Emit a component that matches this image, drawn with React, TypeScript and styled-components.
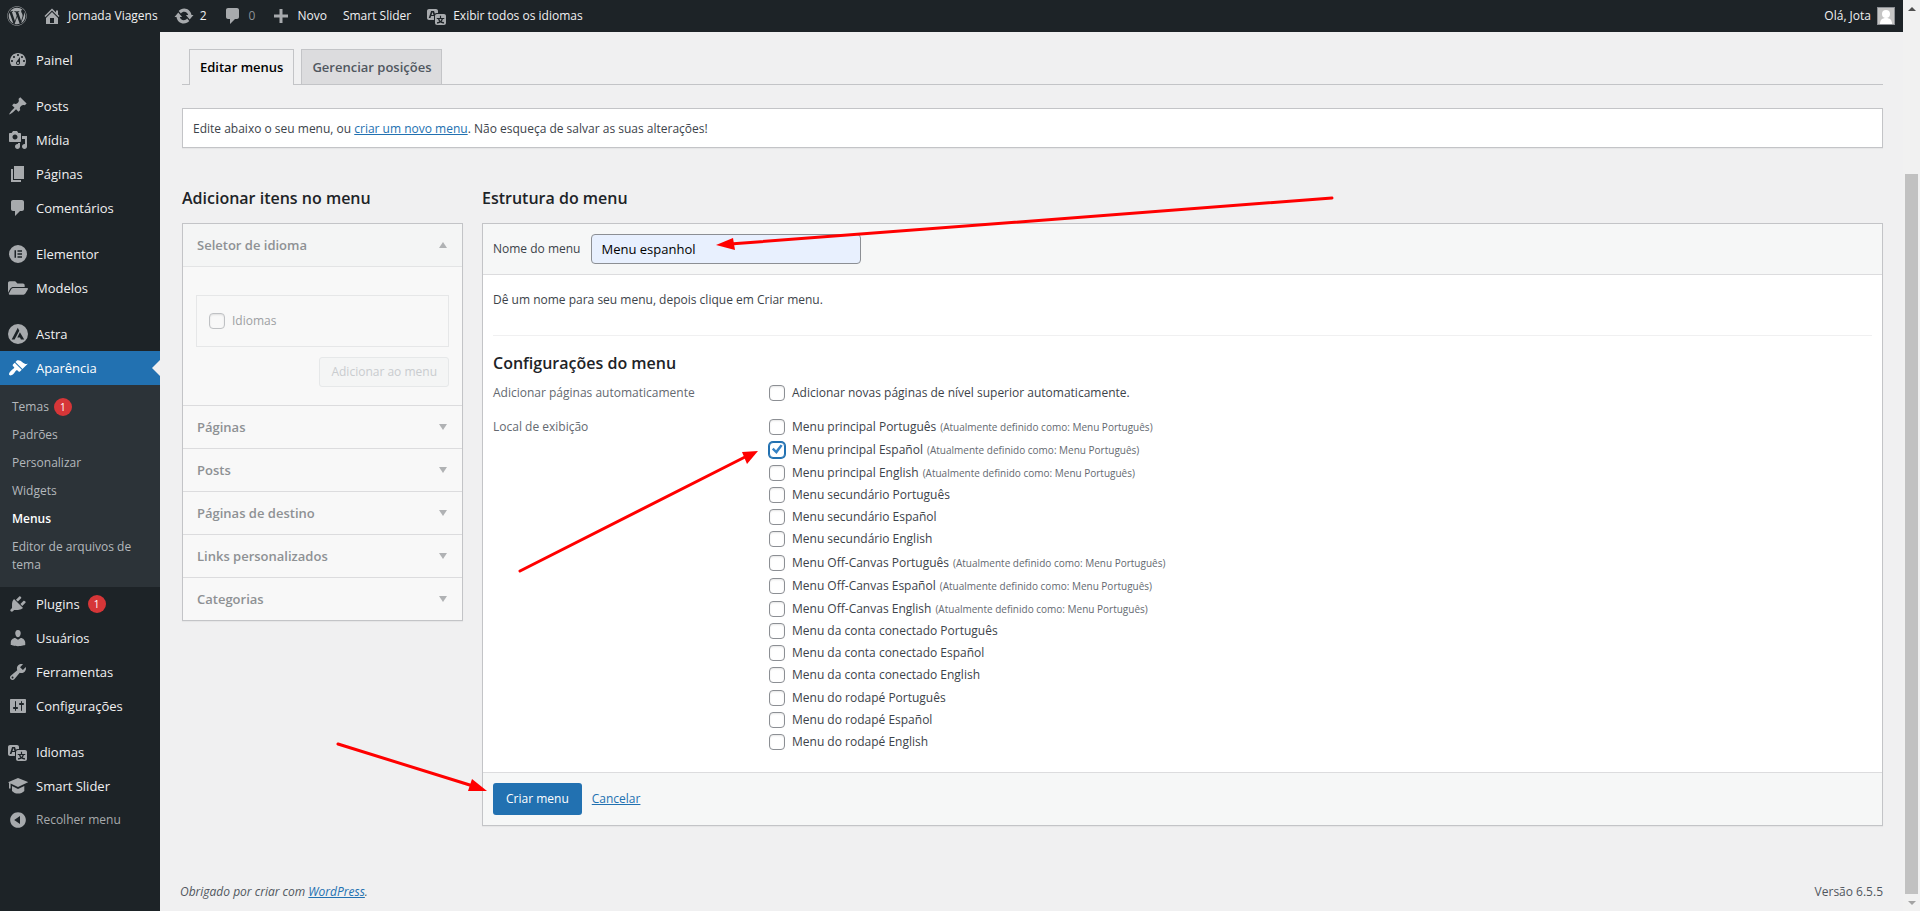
import React, { useState } from 'react';
import styled, { createGlobalStyle, css } from 'styled-components';
import { FaFolderOpen, FaWordpress } from 'react-icons/fa';

const GlobalStyle = createGlobalStyle`
  *, *::before, *::after { box-sizing: border-box; }
  body {
    margin: 0;
    background: #f0f0f1;
    color: #3c434a;
    font: 12px/18px "Open Sans", "Noto Sans", sans-serif;
  }
  button, input { font: inherit; }
  h2, h3, p, ul { margin: 0; padding: 0; }
  ul { list-style: none; }
  a { color: #2271b1; }
`;

const paths = {
  home: 'M16 8.5l1.53 1.53-1.06 1.06L10 4.6l-6.47 6.49-1.06-1.06L10 2.5l4 4v-2h2v4zm-6-2.46l6 5.99V18H4v-5.97zM12 17v-5H8v5h4z',
  update:
    'M10.2 2.5c3.700 0 6.900 2.900 7.300 6.600h2l-3.800 4.400-3.800-4.400h2.300c-.4-1.900-2-3.300-4-3.300-1.300 0-2.500.6-3.300 1.600L4.700 5C6 3.500 8 2.500 10.200 2.500zm-.4 15c-3.700 0-6.900-2.900-7.300-6.600h-2l3.800-4.400 3.800 4.400H5.800c.4 1.900 2 3.300 4 3.300 1.300 0 2.500-.6 3.300-1.600L15.300 15c-1.300 1.500-3.300 2.500-5.500 2.500z',
  plus: 'M17 8.5v3h-5.5V17h-3v-5.5H3v-3h5.5V3h3v5.5z',
  dashboard:
    'M3.76 16h12.48c1.1-1.37 1.76-3.11 1.76-5 0-4.42-3.58-8-8-8s-8 3.58-8 8c0 1.89.66 3.63 1.76 5zM10 4c.55 0 1 .45 1 1s-.45 1-1 1-1-.45-1-1 .45-1 1-1zM6 6c.55 0 1 .45 1 1s-.45 1-1 1-1-.45-1-1 .45-1 1-1zm8 0c.55 0 1 .45 1 1s-.45 1-1 1-1-.45-1-1 .45-1 1-1zm-5.37 5.55L12 7v6c0 1.1-.9 2-2 2s-2-.9-2-2c0-.57.24-1.08.63-1.45zM4 10c.55 0 1 .45 1 1s-.45 1-1 1-1-.45-1-1 .45-1 1-1zm12 0c.55 0 1 .45 1 1s-.45 1-1 1-1-.45-1-1 .45-1 1-1zm-5 3c0-.55-.45-1-1-1s-1 .45-1 1 .45 1 1 1 1-.45 1-1z',
  pin: 'M10.44 3.02l1.82-1.82 6.36 6.35-1.83 1.82c-1.05-.68-2.48-.57-3.41.36l-.75.75c-.92.93-1.04 2.35-.35 3.41l-1.83 1.82-2.41-2.41-2.8 2.79c-.42.42-3.38 2.71-3.8 2.29s1.86-3.39 2.28-3.81l2.79-2.79L4.1 9.36l1.83-1.82c1.05.69 2.48.57 3.4-.36l.75-.75c.93-.92 1.05-2.35.36-3.41z',
  media:
    'M13 11V4c0-.55-.45-1-1-1h-1.67L9 1H5L3.67 3H2c-.55 0-1 .45-1 1v7c0 .55.45 1 1 1h10c.55 0 1-.45 1-1zM7 4.5c1.38 0 2.5 1.12 2.5 2.5S8.38 9.5 7 9.5 4.5 8.38 4.5 7 5.62 4.5 7 4.5zM14 6h5v10.5c0 1.38-1.12 2.5-2.5 2.5S14 17.88 14 16.5s1.12-2.5 2.5-2.5c.17 0 .34.02.5.05V9h-3V6zm-4 8.05V13h2v3.5c0 1.38-1.12 2.5-2.5 2.5S7 17.88 7 16.5 8.12 14 9.5 14c.17 0 .34.02.5.05z',
  page: 'M6 15V2h10v13H6zm-1 1h8v2H3V5h2v11z',
  comment: 'M5 2h9c1.1 0 2 .9 2 2v7c0 1.1-.9 2-2 2h-2l-5 5v-5H5c-1.1 0-2-.9-2-2V4c0-1.1.9-2 2-2z',
  elementor: 'M10 1a9 9 0 100 18 9 9 0 000-18zM6.500 6.200h1.500v7.600H6.500zM9.500 6.200h4.500v1.500H9.500zM9.500 9.250h4.500v1.500H9.500zM9.500 12.300h4.500v1.500H9.500z',
  astra: 'M10 0a10 10 0 100 20 10 10 0 000-20zM9.800 3.800L11.300 6.800 6.600 15.600H3.700zM11.900 8.200L16.200 15.600H12.900L12 13.500H9.300z',
  brush:
    'M14.48 11.06L7.41 3.99l1.5-1.5c.5-.56 2.3-.47 3.51.32 1.21.8 1.43 1.28 2.91 2.1 1.18.64 2.45 1.26 4.45.85zm-.71.71L6.7 4.7 4.93 6.47c-.39.39-.39 1.02 0 1.41l1.06 1.06c.39.39.39 1.03 0 1.42-.6.6-1.43 1.11-2.21 1.69-.35.26-.7.53-1.01.84C1.43 14.23.4 16.08 1.4 17.07c.99 1 2.84-.03 4.18-1.36.31-.31.58-.66.85-1.02.57-.78 1.08-1.61 1.69-2.21.39-.39 1.02-.39 1.41 0l1.06 1.06c.39.39 1.02.39 1.41 0z',
  plug: 'M13.11 4.36L9.87 7.6 8 5.73l3.24-3.24c.35-.34 1.05-.2 1.56.32.52.51.66 1.21.31 1.55zm-8 1.77l.91-1.12 9.01 9.01-1.19.84c-.71.71-2.63 1.16-3.82 1.16H6.14L4.9 17.26c-.59.59-1.54.59-2.12 0-.59-.58-.59-1.53 0-2.12l1.24-1.24v-3.88c0-1.13.4-3.19 1.09-3.89zm7.26 3.97l3.24-3.24c.34-.35 1.04-.21 1.55.31.52.51.66 1.21.31 1.55l-3.24 3.25z',
  user: 'M10 9.25c-2.27 0-2.73-3.44-2.73-3.44C7 4.02 7.82 2 9.97 2c2.16 0 2.98 2.02 2.71 3.81 0 0-.41 3.44-2.68 3.44zm0 2.57L12.72 10c2.39 0 4.52 2.33 4.52 4.53v2.49s-3.65 1.13-7.24 1.13c-3.65 0-7.24-1.13-7.24-1.13v-2.49c0-2.25 1.94-4.48 4.47-4.48z',
  wrench:
    'M16.68 9.77c-1.34 1.34-3.3 1.67-4.95.99l-5.41 6.52c-.99.99-2.59.99-3.58 0s-.99-2.59 0-3.57l6.52-5.42c-.68-1.65-.35-3.61.99-4.95 1.28-1.28 3.12-1.62 4.72-1.06l-2.89 2.89 2.82 2.82 2.86-2.87c.53 1.58.18 3.39-1.08 4.65zM3.81 16.21c.4.39 1.04.39 1.43 0 .4-.4.4-1.04 0-1.43-.39-.4-1.03-.4-1.43 0-.39.39-.39 1.03 0 1.43z',
  settings:
    'M18 16V4c0-.55-.45-1-1-1H3c-.55 0-1 .45-1 1v12c0 .55.45 1 1 1h14c.55 0 1-.45 1-1zM8 11h1c.55 0 1 .45 1 1s-.45 1-1 1H8v1.500c0 .28-.22.5-.5.5s-.5-.22-.5-.5V13H6c-.55 0-1-.45-1-1s.45-1 1-1h1V5.500c0-.28.22-.5.5-.5s.5.22.5.5V11zm5-2h-1c-.55 0-1-.45-1-1s.45-1 1-1h1V5.500c0-.28.22-.5.5-.5s.5.22.5.5V7h1c.55 0 1 .45 1 1s-.45 1-1 1h-1v5.500c0 .28-.22.5-.5.5s-.5-.22-.5-.5V9z',
  translation:
    'M11 7H9.49c-.63 0-1.25.3-1.59.7L7 5H4.13l-2.39 7h1.69l.74-2H7v4H2c-1.1 0-2-.9-2-2V5c0-1.1.9-2 2-2h7c1.1 0 2 .9 2 2v2zM6.51 9H4.49l1-2.93zM10 8h7c1.1 0 2 .9 2 2v7c0 1.1-.9 2-2 2h-7c-1.1 0-2-.9-2-2v-7c0-1.1.9-2 2-2zm7.25 5v-1.08h-3.17V9.75h-1.16v2.17H9.75V13h1.28c.11.85.56 1.85 1.28 2.62-.87.36-1.89.62-2.31.62-.01.02.22.97.2 1.46.84 0 2.21-.5 3.28-1.15 1.09.65 2.48 1.15 3.34 1.15-.02-.49.2-1.44.2-1.46-.43 0-1.49-.27-2.38-.63.7-.77 1.14-1.77 1.25-2.61h1.36zm-3.81 1.93c-.5-.46-.85-1.13-1.01-1.93h2.09c-.17.8-.51 1.47-1 1.93l-.04.03s-.03-.02-.04-.03z',
  cap: 'M10 2L0 6.200l1 .5V12.500h1.600V7.500L10 11l10.200-4.800zM4 9.900V15c1.500 1.600 3.600 2.600 6 2.600s4.900-1 6.300-2.600V9.900L10 12.900z',
  collapse:
    'M10 2.16c4.33 0 7.84 3.51 7.84 7.84s-3.51 7.84-7.84 7.84S2.16 14.33 2.16 10 5.71 2.16 10 2.16zm2 11.72V6.12L6.18 9.97z',
};

type IconName = keyof typeof paths;

const Glyph = styled.svg`
  flex: none;
  width: 20px;
  height: 20px;
  fill: currentColor;
`;

const Icon = ({ name }: { name: IconName }) => (
  <Glyph viewBox="0 0 20 20" aria-hidden="true">
    <path fillRule="evenodd" d={paths[name]} />
  </Glyph>
);

/* Window frame */

const Frame = styled.div`
  position: relative;
  display: grid;
  grid-template-columns: minmax(0, 1fr) 17px;
  min-height: 100vh;
`;

const Page = styled.div`
  display: grid;
  grid-template-columns: 160px minmax(0, 1fr);
  grid-template-rows: 32px 1fr;
`;

const Scrollbar = styled.div`
  display: flex;
  flex-direction: column;
  background: #f1f1f1;
`;

const ScrollArrow = styled.span<{ $down?: boolean }>`
  display: grid;
  place-items: center;
  height: 17px;

  &::before {
    content: '';
    border: 4px solid transparent;
    ${({ $down }) =>
      $down
        ? css`border-top-color: #a3a3a3; border-bottom: 0;`
        : css`border-bottom-color: #505050; border-top: 0;`}
  }
`;

const ScrollGap = styled.span`
  flex: 157;
`;

const ScrollThumb = styled.span`
  flex: 720;
  margin: 0 2px;
  background: #c1c1c1;
`;

/* Admin bar */

const AdminBar = styled.header`
  grid-column: 1 / -1;
  display: flex;
  justify-content: space-between;
  padding-left: 7px;
  background: #1d2327;
`;

const BarGroup = styled.nav`
  display: flex;
  align-items: center;
`;

const BarLink = styled.a<{ $muted?: boolean }>`
  display: flex;
  align-items: center;
  gap: 6px;
  height: 32px;
  padding: 0 8px;
  color: ${({ $muted }) => ($muted ? '#8c9196' : '#f0f0f1')};
  text-decoration: none;
  white-space: nowrap;

  svg {
    color: #a7aaad;
  }
`;

const LogoLink = styled(BarLink)`
  padding: 0 7px 0 0;
`;

const Avatar = styled.svg`
  width: 18px;
  height: 18px;
`;

/* Side menu */

const SideMenu = styled.nav`
  padding-top: 11px;
  background: #1d2327;
  font-size: 13px;
`;

const MenuGroup = styled.ul`
  & + & {
    margin-top: 12px;
  }
`;

const MenuLink = styled.a<{ $current?: boolean }>`
  display: flex;
  align-items: center;
  gap: 8px;
  height: 34px;
  padding-left: 8px;
  background: ${({ $current }) => ($current ? '#2271b1' : 'transparent')};
  color: ${({ $current }) => ($current ? '#fff' : '#f0f0f1')};
  text-decoration: none;

  svg {
    color: ${({ $current }) => ($current ? '#fff' : '#a7aaad')};
  }

  ${({ $current }) =>
    $current &&
    css`
      &::after {
        content: '';
        margin-left: auto;
        border: 8px solid transparent;
        border-left: 0;
        border-right-color: #f0f0f1;
      }
    `}
`;

const CollapseButton = styled.button`
  display: flex;
  align-items: center;
  gap: 8px;
  width: 100%;
  height: 34px;
  padding: 0 0 0 8px;
  border: 0;
  background: none;
  color: #a7aaad;
  font-size: 12px;
`;

const Submenu = styled.ul`
  padding: 8px 0;
  background: #2c3338;
  font-size: 12px;
`;

const SubmenuLink = styled.a<{ $current?: boolean }>`
  display: flex;
  align-items: center;
  gap: 5px;
  padding: 5px 12px;
  color: ${({ $current }) => ($current ? '#fff' : '#b4b8bc')};
  font-weight: ${({ $current }) => ($current ? 600 : 400)};
  text-decoration: none;
`;

const Count = styled.span`
  display: grid;
  place-items: center;
  width: 18px;
  height: 18px;
  border-radius: 9px;
  background: #d63638;
  color: #fff;
  font-size: 10px;
`;

/* Content */

const Content = styled.main`
  display: flex;
  flex-direction: column;
  padding: 17px 20px 0 22px;
`;

const Tabs = styled.nav`
  display: flex;
  align-items: flex-end;
  gap: 7px;
  height: 36px;
  padding-left: 7px;
  border-bottom: 1px solid #c3c4c7;
`;

const Tab = styled.a<{ $active?: boolean }>`
  height: ${({ $active }) => ($active ? 36 : 35)}px;
  margin-bottom: ${({ $active }) => ($active ? -1 : 0)}px;
  padding: 0 10px;
  border: 1px solid #c3c4c7;
  border-bottom: 0;
  background: ${({ $active }) => ($active ? '#f0f0f1' : '#dcdcde')};
  color: ${({ $active }) => ($active ? '#000' : '#50575e')};
  font-size: 13px;
  font-weight: 600;
  line-height: 35px;
  text-decoration: none;
`;

const Notice = styled.p`
  margin-top: 23px;
  padding: 11px 10px 9px;
  border: 1px solid #c3c4c7;
  background: #fff;
  box-shadow: 0 1px 1px rgba(0, 0, 0, 0.04);
`;

const Columns = styled.div`
  display: grid;
  grid-template-columns: 281px minmax(0, 1fr);
  align-items: start;
  gap: 19px;
  margin-top: 38px;
`;

const Heading = styled.h2`
  color: #1d2327;
  font-size: 16px;
  font-weight: 600;
  line-height: 24px;
`;

const Accordion = styled.div`
  margin-top: 13px;
  border: 1px solid #c3c4c7;
  background: #f8f8f8;
  box-shadow: 0 1px 1px rgba(0, 0, 0, 0.04);
`;

const Section = styled.section`
  & + & {
    border-top: 1px solid #dcdcde;
  }
`;

const SectionToggle = styled.button<{ $open?: boolean }>`
  display: flex;
  align-items: center;
  justify-content: space-between;
  width: 100%;
  height: ${({ $open }) => ($open ? 43 : 42)}px;
  padding: 0 15px 0 14px;
  border: 0;
  border-bottom: ${({ $open }) => ($open ? '1px solid #e3e4e5' : '0')};
  background: ${({ $open }) => ($open ? '#f4f5f5' : 'transparent')};
  color: #8e9194;
  font-size: 13px;
  font-weight: 600;

  &::after {
    content: '';
    border: 4px solid transparent;
    ${({ $open }) =>
      $open
        ? css`border-bottom: 6px solid #b0b2b4; border-top: 0;`
        : css`border-top: 6px solid #b0b2b4; border-bottom: 0;`}
  }
`;

const SectionBody = styled.div`
  display: flex;
  flex-direction: column;
  align-items: flex-end;
  gap: 10px;
  padding: 28px 13px 18px;
`;

const LanguageBox = styled.div`
  width: 100%;
  padding: 16px 12px;
  border: 1px solid #e6e7e8;
`;

const AddButton = styled.button`
  height: 30px;
  padding: 0 11px;
  border: 1px solid #e6e8e9;
  border-radius: 3px;
  background: #f4f5f5;
  color: #c9cccf;
`;

const Option = styled.label<{ $height?: number; $muted?: boolean }>`
  display: flex;
  align-items: center;
  gap: 7px;
  height: ${({ $height = 18 }) => $height}px;
  color: ${({ $muted }) => ($muted ? '#9da0a3' : '#3c434a')};
`;

const Checkbox = styled.input<{ $muted?: boolean }>`
  appearance: none;
  flex: none;
  display: grid;
  place-items: center;
  width: 16px;
  height: 16px;
  margin: 0;
  border: 1px solid ${({ $muted }) => ($muted ? '#bfc1c4' : '#8c8f94')};
  border-radius: 4px;
  background: ${({ $muted }) => ($muted ? '#f8f8f8' : '#fff')};
  box-shadow: inset 0 1px 2px rgba(0, 0, 0, 0.1);

  &:checked {
    border-color: #2271b1;
    box-shadow: 0 0 0 1px #2271b1;
  }

  &:checked::before {
    content: '';
    width: 12px;
    height: 12px;
    background: #3582c4;
    clip-path: polygon(8% 50%, 22% 36%, 42% 56%, 80% 8%, 97% 18%, 46% 88%);
  }
`;

const Panel = styled.form`
  margin-top: 13px;
  border: 1px solid #c3c4c7;
  background: #fff;
  box-shadow: 0 1px 1px rgba(0, 0, 0, 0.04);
`;

const PanelHeader = styled.div`
  display: flex;
  align-items: center;
  gap: 11px;
  padding: 10px;
  border-bottom: 1px solid #dcdcde;
  background: #f6f7f7;
`;

const NameInput = styled.input`
  width: 270px;
  height: 30px;
  padding: 0 9px;
  border: 1px solid #8c8f94;
  border-radius: 4px;
  background: #e8f0fe;
  color: #000;
  font-size: 13px;
`;

const PanelBody = styled.div`
  padding: 16px 10px 18px;
`;

const Settings = styled.section`
  margin-top: 26px;
  padding-top: 15px;
  border-top: 1px solid #f0f0f1;
`;

const Fieldset = styled.div`
  display: grid;
  grid-template-columns: 276px minmax(0, 1fr);
  margin-top: 6px;

  & + & {
    margin-top: 10px;
  }
`;

const FieldLabel = styled.span`
  color: #646970;
  line-height: 24px;
`;

const OptionGroup = styled.div<{ $loose?: boolean }>`
  padding-bottom: ${({ $loose }) => ($loose ? 1 : 0)}px;
`;

const Note = styled.span`
  margin-left: -3px;
  color: #646970;
  font-size: 10px;
`;

const PanelFooter = styled.div`
  display: flex;
  align-items: center;
  gap: 10px;
  padding: 10px;
  border-top: 1px solid #dcdcde;
  background: #f6f7f7;
`;

const SubmitButton = styled.button`
  height: 32px;
  padding: 0 13px;
  border: 0;
  border-radius: 3px;
  background: #2271b1;
  color: #fff;
`;

const PageFooter = styled.footer`
  display: flex;
  justify-content: space-between;
  margin: auto 0 10px -2px;
  color: #50575e;
`;

/* Red pointer arrows drawn over the page */

const Annotations = styled.svg`
  position: absolute;
  inset: 0;
  width: 100%;
  height: 100%;
  pointer-events: none;
`;

interface MenuItem {
  label: string;
  icon: IconName | 'folder';
  count?: number;
  current?: boolean;
}

const menuGroups: MenuItem[][] = [
  [{ label: 'Painel', icon: 'dashboard' }],
  [
    { label: 'Posts', icon: 'pin' },
    { label: 'Mídia', icon: 'media' },
    { label: 'Páginas', icon: 'page' },
    { label: 'Comentários', icon: 'comment' },
  ],
  [
    { label: 'Elementor', icon: 'elementor' },
    { label: 'Modelos', icon: 'folder' },
  ],
  [
    { label: 'Astra', icon: 'astra' },
    { label: 'Aparência', icon: 'brush', current: true },
    { label: 'Plugins', icon: 'plug', count: 1 },
    { label: 'Usuários', icon: 'user' },
    { label: 'Ferramentas', icon: 'wrench' },
    { label: 'Configurações', icon: 'settings' },
  ],
  [
    { label: 'Idiomas', icon: 'translation' },
    { label: 'Smart Slider', icon: 'cap' },
  ],
];

const submenu = [
  { label: 'Temas', count: 1 },
  { label: 'Padrões' },
  { label: 'Personalizar' },
  { label: 'Widgets' },
  { label: 'Menus', current: true },
  { label: 'Editor de arquivos de tema' },
];

const closedSections = ['Páginas', 'Posts', 'Páginas de destino', 'Links personalizados', 'Categorias'];

const languages = ['Português', 'Español', 'English'];

const locationGroups = [
  { name: 'Menu principal', assigned: true },
  { name: 'Menu secundário', assigned: false },
  { name: 'Menu Off-Canvas', assigned: true },
  { name: 'Menu da conta conectado', assigned: false },
  { name: 'Menu do rodapé', assigned: false },
];

const arrows = [
  { line: 'M1332 198L730 244', head: '716,245 733,238 735,250' },
  { line: 'M520 571L745 457', head: '758,451 742,452 747,464' },
  { line: 'M338 744L473 786', head: '487,791 472,779 468,791' },
];

export default function App() {
  const [name, setName] = useState('Menu espanhol');
  const [checked, setChecked] = useState<string[]>(['Menu principal Español']);

  const toggle = (label: string) =>
    setChecked((list) => (list.includes(label) ? list.filter((l) => l !== label) : [...list, label]));

  return (
    <Frame>
      <GlobalStyle />
      <Page>
        <AdminBar>
          <BarGroup aria-label="Barra de ferramentas">
            <LogoLink href="#sobre" aria-label="Sobre o WordPress">
              <FaWordpress size={20} />
            </LogoLink>
            <BarLink href="#site"><Icon name="home" />Jornada Viagens</BarLink>
            <BarLink href="#atualizacoes"><Icon name="update" />2</BarLink>
            <BarLink href="#comentarios" $muted><Icon name="comment" />0</BarLink>
            <BarLink href="#novo"><Icon name="plus" />Novo</BarLink>
            <BarLink href="#slider">Smart Slider</BarLink>
            <BarLink href="#idiomas"><Icon name="translation" />Exibir todos os idiomas</BarLink>
          </BarGroup>
          <BarLink href="#perfil">
            Olá, Jota
            <Avatar viewBox="0 0 18 18" aria-hidden="true">
              <rect x="0.5" y="0.5" width="17" height="17" fill="#c5c5c5" stroke="#8c8f94" />
              <circle cx="9" cy="7" r="4" fill="#fff" />
              <path d="M3 17c0-4 2-6 6-6s6 2 6 6z" fill="#fff" />
            </Avatar>
          </BarLink>
        </AdminBar>

        <SideMenu aria-label="Menu principal">
          {menuGroups.map((group) => (
            <MenuGroup key={group[0].label}>
              {group.map((item) => (
                <li key={item.label}>
                  <MenuLink href="#menu" $current={item.current}>
                    {item.icon === 'folder' ? <FaFolderOpen size={20} /> : <Icon name={item.icon} />}
                    {item.label}
                    {item.count && <Count>{item.count}</Count>}
                  </MenuLink>
                  {item.current && (
                    <Submenu>
                      {submenu.map((sub) => (
                        <li key={sub.label}>
                          <SubmenuLink href="#submenu" $current={sub.current}>
                            {sub.label}
                            {sub.count && <Count>{sub.count}</Count>}
                          </SubmenuLink>
                        </li>
                      ))}
                    </Submenu>
                  )}
                </li>
              ))}
            </MenuGroup>
          ))}
          <CollapseButton type="button"><Icon name="collapse" />Recolher menu</CollapseButton>
        </SideMenu>

        <Content>
          <Tabs aria-label="Menus">
            <Tab href="#editar" $active>Editar menus</Tab>
            <Tab href="#posicoes">Gerenciar posições</Tab>
          </Tabs>
          <Notice>
            Edite abaixo o seu menu, ou <a href="#novo-menu">criar um novo menu</a>. Não esqueça de salvar as suas
            alterações!
          </Notice>

          <Columns>
            <div>
              <Heading>Adicionar itens no menu</Heading>
              <Accordion>
                <Section>
                  <SectionToggle type="button" $open aria-expanded="true">Seletor de idioma</SectionToggle>
                  <SectionBody>
                    <LanguageBox>
                      <Option $muted><Checkbox type="checkbox" $muted />Idiomas</Option>
                    </LanguageBox>
                    <AddButton type="button">Adicionar ao menu</AddButton>
                  </SectionBody>
                </Section>
                {closedSections.map((title) => (
                  <Section key={title}>
                    <SectionToggle type="button" aria-expanded="false">{title}</SectionToggle>
                  </Section>
                ))}
              </Accordion>
            </div>

            <div>
              <Heading>Estrutura do menu</Heading>
              <Panel onSubmit={(e) => e.preventDefault()}>
                <PanelHeader>
                  <label htmlFor="menu-name">Nome do menu</label>
                  <NameInput id="menu-name" type="text" value={name} onChange={(e) => setName(e.target.value)} />
                </PanelHeader>
                <PanelBody>
                  <p>Dê um nome para seu menu, depois clique em Criar menu.</p>
                  <Settings>
                    <Heading as="h3">Configurações do menu</Heading>
                    <Fieldset role="group" aria-labelledby="auto-add">
                      <FieldLabel id="auto-add">Adicionar páginas automaticamente</FieldLabel>
                      <Option $height={23}>
                        <Checkbox type="checkbox" />
                        Adicionar novas páginas de nível superior automaticamente.
                      </Option>
                    </Fieldset>
                    <Fieldset role="group" aria-labelledby="locations">
                      <FieldLabel id="locations">Local de exibição</FieldLabel>
                      <div>
                        {locationGroups.map((group) => (
                          <OptionGroup key={group.name} $loose={!group.assigned}>
                            {languages.map((language) => {
                              const label = `${group.name} ${language}`;
                              return (
                                <Option key={label} $height={group.assigned ? 23 : 22}>
                                  <Checkbox
                                    type="checkbox"
                                    checked={checked.includes(label)}
                                    onChange={() => toggle(label)}
                                  />
                                  {label}
                                  {group.assigned && <Note>(Atualmente definido como: Menu Português)</Note>}
                                </Option>
                              );
                            })}
                          </OptionGroup>
                        ))}
                      </div>
                    </Fieldset>
                  </Settings>
                </PanelBody>
                <PanelFooter>
                  <SubmitButton type="submit">Criar menu</SubmitButton>
                  <a href="#cancelar">Cancelar</a>
                </PanelFooter>
              </Panel>
            </div>
          </Columns>

          <PageFooter>
            <em>Obrigado por criar com <a href="#wordpress">WordPress</a>.</em>
            <span>Versão 6.5.5</span>
          </PageFooter>
        </Content>
      </Page>

      <Scrollbar aria-hidden="true">
        <ScrollArrow />
        <ScrollGap />
        <ScrollThumb />
        <ScrollArrow $down />
      </Scrollbar>

      <Annotations aria-hidden="true">
        {arrows.map((arrow) => (
          <g key={arrow.head} fill="#f00" stroke="#f00">
            <path d={arrow.line} strokeWidth="3" strokeLinecap="round" />
            <polygon points={arrow.head} strokeWidth="0" />
          </g>
        ))}
      </Annotations>
    </Frame>
  );
}
